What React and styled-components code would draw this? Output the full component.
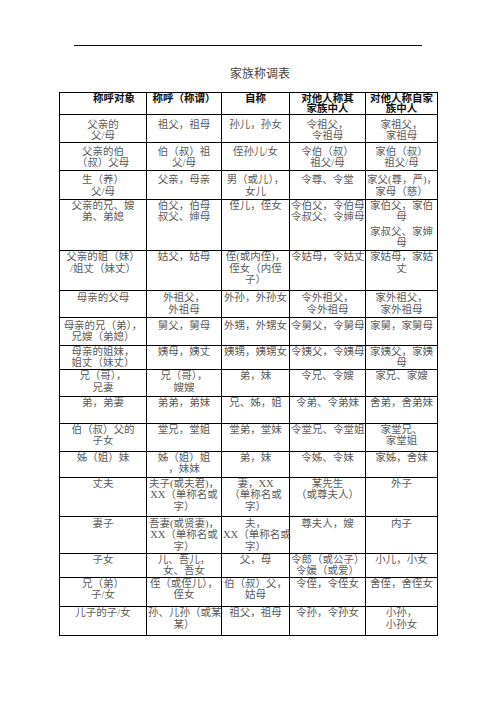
import React from 'react'
import styled, { createGlobalStyle } from 'styled-components'

const GlobalStyle = createGlobalStyle`
  html, body {
    margin: 0;
    padding: 0;
    background: #fff;
  }
  body {
    font-family: "Liberation Serif", "Noto Sans CJK SC", serif;
  }
`

const Page = styled.div`
  width: 496px;
  height: 702px;
  padding-top: 45px;
  box-sizing: border-box;
`

const Rule = styled.div`
  margin: 0 74px;
  height: 1px;
  background: #111;
`

const Title = styled.h1`
  margin: 21px 0 0;
  padding-left: 24px;
  text-align: center;
  font-weight: 400;
  font-size: 12px;
  line-height: 14px;
  color: #444;
`

const Table = styled.table`
  margin: 11px 0 0 59px;
  width: 379px;
  border-collapse: collapse;
  table-layout: fixed;
`

const Col = styled.col`
  width: ${p => p.$w}px;
`

const Row = styled.tr`
  height: ${p => p.$h}px;
`

const HeadCell = styled.th`
  border: 1px solid #000;
  padding: 1px 0 0 ${p => p.$indent || 0}px;
  vertical-align: top;
  text-align: center;
  white-space: nowrap;
  font-size: 10.5px;
  line-height: 10px;
  font-weight: 700;
  color: #111;
`

const Cell = styled.td`
  border: 1px solid #000;
  padding: 0 1px;
  vertical-align: top;
  text-align: center;
  white-space: nowrap;
  font-size: 10.5px;
  line-height: 11.5px;
  color: #5a5a5a;
`

const Stack = styled.div`
  margin-top: ${p => p.$pt}px;
`

const Line = styled.div`
  margin-top: ${p => (p.$gap ? 3 : 0)}px;
`

const widths = [87, 75, 68, 76, 72]

const head = [
  ['称呼对象'],
  ['称呼（称谓）'],
  ['自称'],
  ['对他人称其', '家族中人'],
  ['对他人称自家', '族中人'],
]

const rows = [
  { h: 27, pt: 3.5, cells: [['父亲的', '父/母'], ['祖父，祖母'], ['孙儿，孙女'], ['令祖父，', '令祖母'], ['家祖父，', '家祖母']] },
  { h: 28, pt: 3, cells: [['父亲的伯', '（叔）父母'], ['伯（叔）祖', '父/母'], ['侄孙儿/女'], ['令伯（叔）', '祖父/母'], ['家伯（叔）', '祖父/母']] },
  { h: 29, pt: 3.5, cells: [['生（养）', '父/母'], ['父亲，母亲'], ['男（或儿），', '女儿'], ['令尊、令堂'], ['家父(尊，严)，', '家母（慈）']] },
  { h: 51, pt: 0, cells: [['父亲的兄、嫂', '弟、弟媳'], ['伯父，伯母', '叔父、婶母'], ['侄儿，侄女'], ['令伯父，令伯母', '令叔父、令婶母'], ['家伯父，家伯', '母', '^家叔父、家婶', '母']] },
  { h: 40, pt: 0.5, cells: [['父亲的姐（妹）', '/姐丈（妹丈）'], ['姑父，姑母'], ['侄(或内侄)，', '侄女（内侄', '子）'], ['令姑母，令姑丈'], ['家姑母，家姑', '丈']] },
  { h: 27, pt: 1.5, cells: [['母亲的父母'], ['外祖父，', '外祖母'], ['外孙，外孙女'], ['令外祖父，', '令外祖母'], ['家外祖父，', '家外祖母']] },
  { h: 28, pt: 2, cells: [['母亲的兄（弟），', '兄嫂（弟媳）'], ['舅父，舅母'], ['外甥，外甥女'], ['令舅父，令舅母'], ['家舅，家舅母']] },
  { h: 24, pt: 0, cells: [['母亲的姐妹，', '姐丈（妹丈）'], ['姨母，姨丈'], ['姨甥，姨甥女'], ['令姨父，令姨母'], ['家姨父，家姨', '母']] },
  { h: 27, pt: 0.5, cells: [['兄（哥），', '兄妻'], ['兄（哥），', '嫂嫂'], ['弟，妹'], ['令兄、令嫂'], ['家兄、家嫂']] },
  { h: 27, pt: 0, cells: [['弟，弟妻'], ['弟弟，弟妹'], ['兄、姊，姐'], ['令弟、令弟妹'], ['舍弟，舍弟妹']] },
  { h: 28, pt: 0, cells: [['伯（叔）父的', '子女'], ['堂兄，堂姐'], ['堂弟，堂妹'], ['令堂兄、令堂姐'], ['家堂兄、', '家堂姐']] },
  { h: 26, pt: 0, cells: [['姊（姐）妹'], ['姊（姐）姐', '，妹妹'], ['弟，妹'], ['令姊、令妹'], ['家姊，舍妹']] },
  { h: 39, pt: 0, cells: [['丈夫'], ['夫子(或夫君)，', 'XX（单称名或', '字）'], ['妻，XX', '（单称名或', '字）'], ['某先生', '（或尊夫人）'], ['外子']] },
  { h: 37, pt: 1, cells: [['妻子'], ['吾妻(或贤妻)，', 'XX（单称名或', '字）'], ['夫，', 'XX（单称名或', '字）'], ['尊夫人，嫂'], ['内子']] },
  { h: 24, pt: 0, cells: [['子女'], ['儿、吾儿，', '女、吾女'], ['父，母'], ['令郎（或公子）', '令媛（或爱）'], ['小儿，小女']] },
  { h: 29, pt: 0, cells: [['兄（弟）', '子/女'], ['侄（或侄儿），', '侄女'], ['伯（叔）父，', '姑母'], ['令侄，令侄女'], ['舍侄，舍侄女']] },
  { h: 29, pt: 0.5, cells: [['儿子的子/女'], ['孙、儿孙（或某', '某）'], ['祖父，祖母'], ['令孙，令孙女'], ['小孙，', '小孙女']] },
]

function Lines({ lines }) {
  return lines.map((l, i) =>
    l.startsWith('^')
      ? <Line key={i} $gap>{l.slice(1)}</Line>
      : <Line key={i}>{l}</Line>
  )
}

export default function App() {
  return (
    <Page>
      <GlobalStyle />
      <Rule />
      <Title>家族称调表</Title>
      <Table>
        <colgroup>
          {widths.map((w, i) => <Col key={i} $w={w} />)}
        </colgroup>
        <thead>
          <Row $h={20}>
            {head.map((lines, i) => (
              <HeadCell key={i} $indent={i === 0 ? 22 : 0}>
                <Lines lines={lines} />
              </HeadCell>
            ))}
          </Row>
        </thead>
        <tbody>
          {rows.map((row, r) => (
            <Row key={r} $h={row.h}>
              {row.cells.map((lines, c) => (
                <Cell key={c}>
                  <Stack $pt={row.pt}>
                    <Lines lines={lines} />
                  </Stack>
                </Cell>
              ))}
            </Row>
          ))}
        </tbody>
      </Table>
    </Page>
  )
}
